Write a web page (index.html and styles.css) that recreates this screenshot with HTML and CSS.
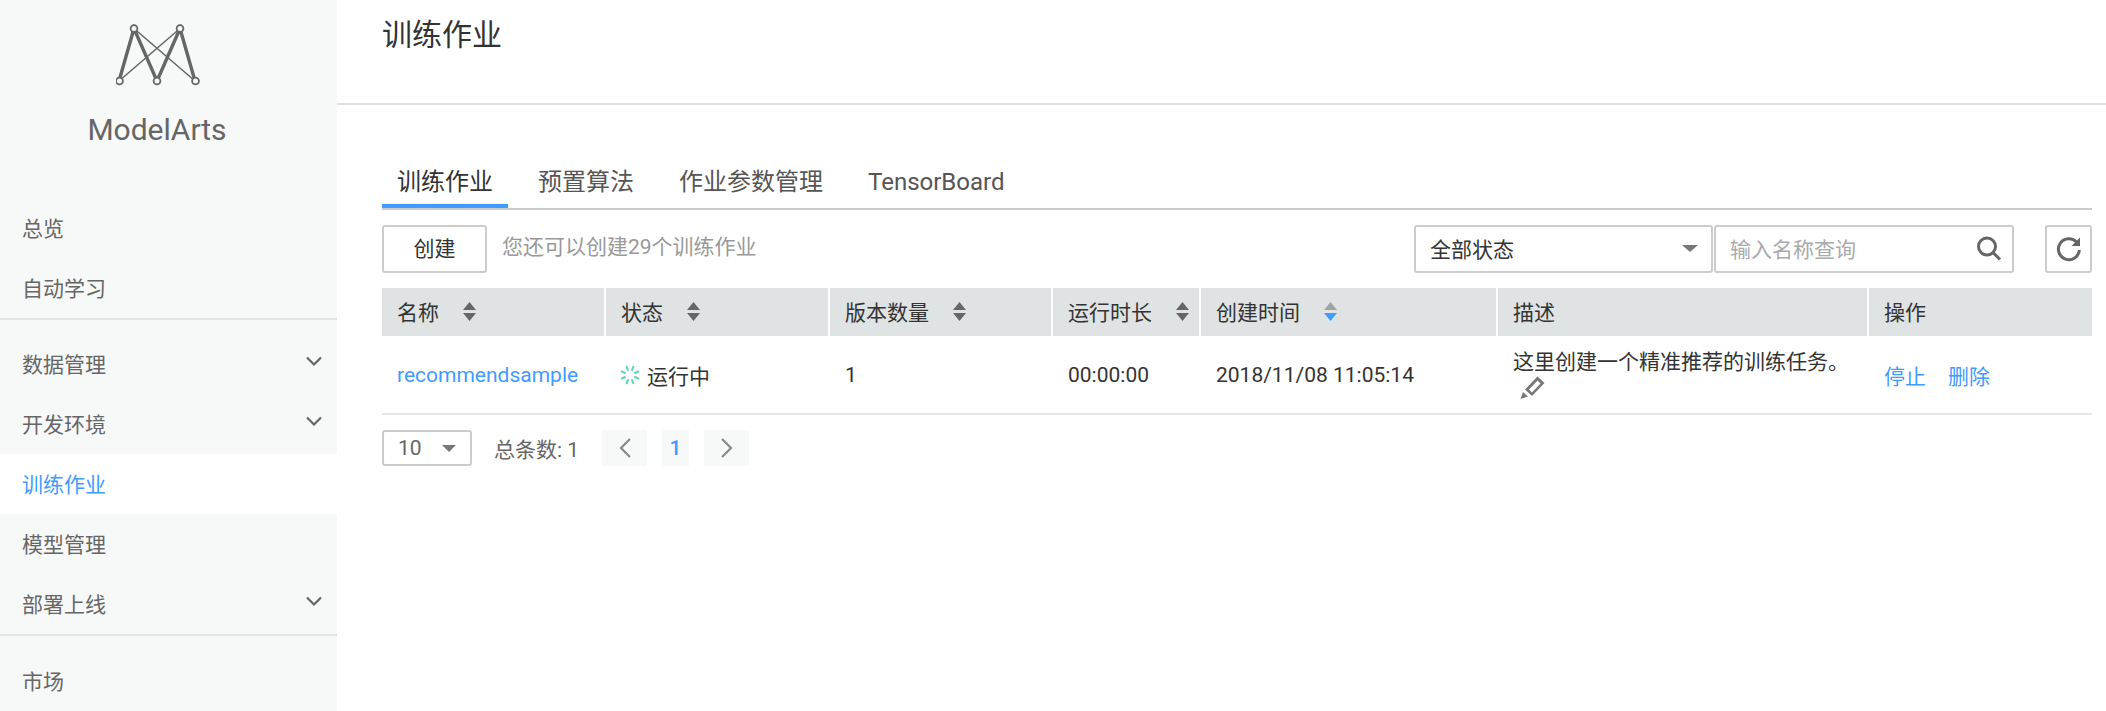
FILE: index.html
```html
<!DOCTYPE html>
<html lang="zh-CN">
<head>
<meta charset="utf-8">
<title>ModelArts</title>
<link rel="stylesheet" href="styles.css">
</head>
<body>
<div class="app">
  <aside class="sidebar">
    <div class="brand">
      <svg class="logo" width="84" height="62" viewBox="0 0 84 62">
        <g stroke="#666" fill="none">
          <path stroke-width="1.5" d="M18 4.500 79 57M64 4.500 3 57"/>
          <path stroke-width="3.400" d="M3 57 18 4.500 41 57 64 4.500 79 57"/>
        </g>
        <g stroke="#666" stroke-width="1.800" fill="#f7f8f8">
          <circle cx="18" cy="4.500" r="3.400"/><circle cx="64" cy="4.500" r="3.400"/>
          <circle cx="3.500" cy="57" r="3.400"/><circle cx="41" cy="57" r="3.400"/><circle cx="79.500" cy="57" r="3.400"/>
        </g>
      </svg>
      <div class="brand-name">ModelArts</div>
    </div>
    <nav class="nav">
      <a class="nav-item">总览</a>
      <a class="nav-item">自动学习</a>
    </nav>
    <nav class="nav nav-ruled">
      <a class="nav-item">数据管理<svg class="chev" width="16" height="10" viewBox="0 0 16 10"><path d="M1 1.500 8 8.500 15 1.500"/></svg></a>
      <a class="nav-item">开发环境<svg class="chev" width="16" height="10" viewBox="0 0 16 10"><path d="M1 1.500 8 8.500 15 1.500"/></svg></a>
      <a class="nav-item active">训练作业</a>
      <a class="nav-item">模型管理</a>
      <a class="nav-item">部署上线<svg class="chev" width="16" height="10" viewBox="0 0 16 10"><path d="M1 1.500 8 8.500 15 1.500"/></svg></a>
    </nav>
    <nav class="nav nav-ruled nav-last">
      <a class="nav-item">市场</a>
    </nav>
  </aside>
  <main class="main">
    <header class="page-head"><h1 class="page-title">训练作业</h1></header>
    <div class="content">
      <div class="tabs">
        <a class="tab tab-on">训练作业</a>
        <a class="tab">预置算法</a>
        <a class="tab">作业参数管理</a>
        <a class="tab">TensorBoard</a>
      </div>
      <div class="toolbar">
        <button class="btn">创建</button>
        <span class="hint">您还可以创建29个训练作业</span>
        <div class="select-box">全部状态<span class="caret"></span></div>
        <div class="search-box">
          <span class="placeholder">输入名称查询</span>
          <svg width="26" height="26" viewBox="0 0 26 26" class="search-icon"><circle cx="11" cy="10.500" r="8.500"/><path d="M17 16.500 24 23.500"/></svg>
        </div>
        <button class="refresh">
          <svg width="28" height="28" viewBox="0 0 28 28"><path class="r-arc" d="M21.800 7.200A10.500 10.500 0 1 0 24.400 15"/><path class="r-tip" d="M25 2.600V11H16.600Z"/></svg>
        </button>
      </div>
      <table class="grid">
        <colgroup>
          <col class="c1"><col class="c2"><col class="c3"><col class="c4"><col class="c5"><col class="c6"><col class="c7">
        </colgroup>
        <thead>
          <tr>
            <th><span class="th-in"><span class="th-label">名称</span><svg class="sort" width="13" height="19" viewBox="0 0 13 19"><path d="M6.500 0 13 8H0ZM0 11H13L6.500 19Z"/></svg></span></th>
            <th><span class="th-in"><span class="th-label">状态</span><svg class="sort" width="13" height="19" viewBox="0 0 13 19"><path d="M6.500 0 13 8H0ZM0 11H13L6.500 19Z"/></svg></span></th>
            <th><span class="th-in"><span class="th-label">版本数量</span><svg class="sort" width="13" height="19" viewBox="0 0 13 19"><path d="M6.500 0 13 8H0ZM0 11H13L6.500 19Z"/></svg></span></th>
            <th><span class="th-in"><span class="th-label">运行时长</span><svg class="sort" width="13" height="19" viewBox="0 0 13 19"><path d="M6.500 0 13 8H0ZM0 11H13L6.500 19Z"/></svg></span></th>
            <th><span class="th-in"><span class="th-label">创建时间</span><svg class="sort sort-active" width="13" height="19" viewBox="0 0 13 19"><path class="up" d="M6.500 0 13 8H0Z"/><path class="down" d="M0 11H13L6.500 19Z"/></svg></span></th>
            <th>描述</th>
            <th class="last">操作</th>
          </tr>
        </thead>
        <tbody>
          <tr>
            <td class="tight"><a class="link">recommendsample</a></td>
            <td class="tight"><span class="status"><svg class="spin" width="20" height="20" viewBox="0 0 20 20"><g stroke="#62d9b6" stroke-width="2.200" stroke-linecap="round"><path d="M12.100 4.900 13.400 1.800"/><path transform="rotate(45 10 10)" d="M12.100 4.900 13.400 1.800"/><path transform="rotate(90 10 10)" d="M12.100 4.900 13.400 1.800"/><path transform="rotate(135 10 10)" d="M12.100 4.900 13.400 1.800"/><path transform="rotate(180 10 10)" d="M12.100 4.900 13.400 1.800"/><path transform="rotate(225 10 10)" d="M12.100 4.900 13.400 1.800"/><path transform="rotate(270 10 10)" d="M12.100 4.900 13.400 1.800"/><path transform="rotate(315 10 10)" d="M12.100 4.900 13.400 1.800"/></g></svg>运行中</span></td>
            <td>1</td>
            <td>00:00:00</td>
            <td>2018/11/08 11:05:14</td>
            <td class="desc">这里创建一个精准推荐的训练任务。<svg class="pencil" width="25" height="24" viewBox="0 0 25 24"><path d="M0.500 24 3 17 8 21.500Z"/><path d="M5 14.500 17.500 1.500 24.500 8 12 21ZM17.500 5.500 9 14.500 12 17.500 20.500 8.500Z" fill-rule="evenodd"/></svg></td>
            <td class="last"><a class="link op">停止</a><a class="link">删除</a></td>
          </tr>
        </tbody>
      </table>
      <div class="pager">
        <div class="size">10<span class="caret"></span></div>
        <span class="total">总条数: 1</span>
        <a class="pg"><svg width="14" height="22" viewBox="0 0 14 22"><path d="M12 2 3 11 12 20"/></svg></a>
        <a class="pg pg-num">1</a>
        <a class="pg"><svg width="14" height="22" viewBox="0 0 14 22"><path d="M2 2 11 11 2 20"/></svg></a>
      </div>
    </div>
  </main>
</div>
</body>
</html>
```

FILE: styles.css
```css
* { box-sizing: border-box; }
html, body { margin: 0; height: 100%; }
body {
  font-family: Roboto, "Noto Sans CJK SC", sans-serif;
  font-size: 21px;
  color: #333;
  background: #fff;
  overflow: hidden;
}
.app { display: flex; height: 711px; overflow: hidden; }

.sidebar { width: 337px; flex: none; background: #f7f8f8; color: #666; }
.brand { display: flex; flex-direction: column; align-items: center; padding: 24px 23px 0 0; height: 198px; }
.logo { display: block; margin-left: 1px; }
.brand-name { font-size: 30px; line-height: 40px; margin-top: 24px; color: #666; }
.nav-ruled { border-top: 2px solid #e3e5e5; padding-top: 14px; }
.nav-last { padding-top: 15px; }
.nav-item { display: flex; align-items: center; justify-content: space-between; height: 60px; padding: 0 15px 2px 22px; }
.nav-item.active { background: #fff; color: #3f9bff; }
.chev { fill: none; stroke: #666; stroke-width: 2.2; margin-top: -5px; }

.main { flex: 1; min-width: 0; }
.page-head { height: 105px; border-bottom: 2px solid #dfe1e1; padding: 15px 0 0 45px; }
.page-title { margin: 0; font-size: 30px; font-weight: 400; line-height: 40px; color: #333; }
.content { padding: 55px 14px 0 45px; }

.tabs { display: flex; height: 50px; border-bottom: 2px solid #ccc; }
.tab { height: 48px; padding: 2px 15px 0; margin-right: 15px; font-size: 24px; line-height: 40px; color: #555; }
.tab-on { color: #333; border-bottom: 4px solid #3f9bff; }

.toolbar { display: flex; align-items: center; height: 48px; margin-top: 15px; }
.btn { width: 105px; height: 48px; background: #fff; border: 2px solid #ccc; border-radius: 3px; font: inherit; color: #333; padding: 0 0 4px; }
.hint { margin-left: 15px; margin-top: -9px; color: #999; flex: 1; }
.select-box, .search-box { height: 48px; width: 299px; background: #fff; border: 2px solid #ccc; border-radius: 3px; display: flex; align-items: center; justify-content: space-between; padding: 0 14px 2px; }
.select-box .caret { border-left-width: 8px; border-right-width: 8px; margin-right: -1px; }
.search-box { width: 300px; margin-left: 1px; padding-right: 10px; }
.search-icon { margin-top: 2px; fill: none; stroke: #666; stroke-width: 3; }
.placeholder { color: #aaa; }
.caret { width: 0; height: 0; border-left: 7.5px solid transparent; border-right: 7.5px solid transparent; border-top: 7px solid #777; }
.refresh { width: 47px; height: 48px; margin-left: 31px; padding: 0; background: #fff; border: 2px solid #ccc; border-radius: 3px; display: flex; align-items: center; justify-content: center; }
.r-arc { fill: none; stroke: #666; stroke-width: 3; }
.r-tip { fill: #666; }

.grid { width: 1710px; margin-top: 15px; border-collapse: collapse; table-layout: fixed; }
.c1 { width: 223px; } .c2 { width: 224px; } .c3 { width: 223px; } .c4 { width: 148px; } .c5 { width: 297px; } .c6 { width: 371px; } .c7 { width: 224px; }
th { height: 48px; padding: 0 0 2px 15px; background: #e0e3e3; font-weight: 400; text-align: left; border-right: 2px solid #fff; color: #333; white-space: nowrap; }
th.last { border-right: 0; }
.th-in { display: flex; align-items: center; }
.th-label { margin-right: 24px; flex: none; }
.sort { fill: #666; flex: none; }
.sort-active .up { fill: #a0a3a3; }
.sort-active .down { fill: #3f9bff; }
td { height: 78px; padding: 0 15px 0 16px; border-bottom: 2px solid #e6e8e8; vertical-align: middle; color: #333; }
td.tight { padding-left: 15px; }
td.desc { line-height: 26px; }
.link { color: #3f9bff; }
.op { margin-right: 22px; }
.status { display: flex; align-items: center; gap: 7px; }
.pencil { fill: #777; margin-left: 7px; vertical-align: top; display: inline-block; }

.pager { display: flex; align-items: center; height: 36px; margin-top: 15px; }
.size { width: 90px; height: 36px; border: 2px solid #ccc; border-radius: 3px; display: flex; align-items: center; justify-content: space-between; padding: 0 14px; color: #666; }
.total { margin: 0 24px 0 22px; color: #666; width: 84px; white-space: nowrap; }
.pg { width: 45px; height: 36px; background: #f7f8f8; margin-right: 15px; display: flex; align-items: center; justify-content: center; }
.pg svg { fill: none; stroke: #888; stroke-width: 2.2; }
.pg-num { width: 27px; color: #3f9bff; font-weight: 500; }
```
